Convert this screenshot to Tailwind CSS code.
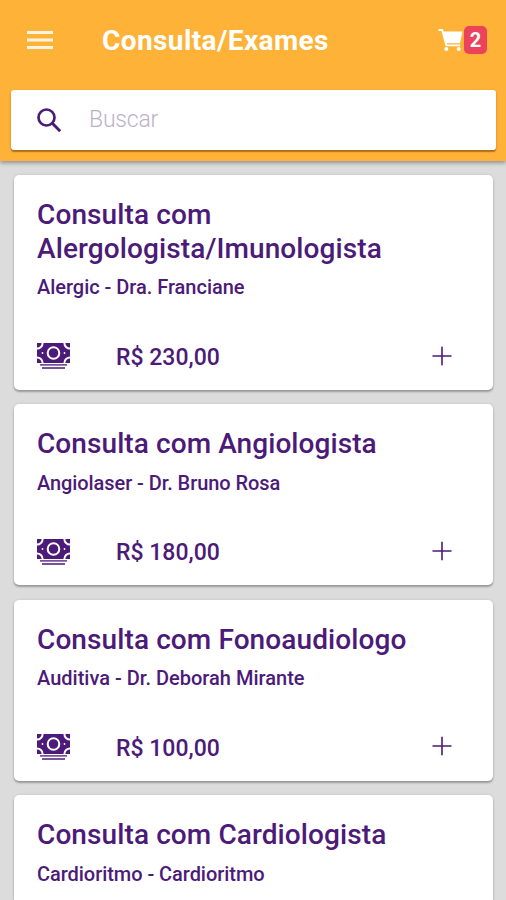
<!DOCTYPE html>
<html lang="pt-BR">
<head>
<meta charset="utf-8">
<title>Consulta/Exames</title>
<script src="https://cdn.jsdelivr.net/npm/@tailwindcss/browser@4"></script>
</head>
<body class="h-[900px] overflow-hidden bg-[#dcdcdc] font-['Roboto',sans-serif] text-[#4c1a78]">
<svg class="hidden">
  <symbol id="cash" viewBox="0 0 33 27">
    <rect width="33" height="20" fill="currentColor"/>
    <g fill="none" stroke="#fff" stroke-width="2">
      <path d="M5.600 -1V0A5.600 5.600 0 0 1 0 5.600H-1M27.400 -1V0A5.600 5.600 0 0 0 33 5.600H34M5.600 21V20A5.600 5.600 0 0 0 0 14.400H-1M27.400 21V20A5.600 5.600 0 0 1 33 14.400H34"/>
      <circle cx="16.500" cy="10" r="5.800"/>
    </g>
    <circle cx="5.500" cy="10" r=".9" fill="#fff"/><circle cx="27.500" cy="10" r=".9" fill="#fff"/>
    <path fill="currentColor" opacity=".75" d="M3 21H30V22.800H3ZM5 24H28V26H5Z"/>
  </symbol>
  <symbol id="plus" viewBox="0 0 20 20">
    <path d="M10 .8V19.200M.5 10H19.500" stroke="currentColor" stroke-width="1.600"/>
  </symbol>
</svg>
<header class="relative flex h-[161px] flex-col bg-[#ffb238] shadow-[0_2px_4px_rgba(0,0,0,0.35)]">
  <div class="flex h-[90px] items-start pl-[27px] text-white">
    <svg class="mt-[31px] h-[18px] w-[26px]" viewBox="0 0 26 18"><path d="M0 1.500H26M0 9H26M0 16.500H26" stroke="#fff5e2" stroke-width="2.800"/></svg>
    <h1 class="mt-[24px] ml-[49px] w-[336px] text-[28px] leading-[34px] font-bold whitespace-nowrap"><span class="tracking-[0.4px]">Consulta/Exames</span></h1>
    <svg class="mt-[28px] h-[24px] w-[25px]" viewBox="0 0 25 24">
      <path d="M.5 2H4.200L8.300 17.300H22" fill="none" stroke="#fff" stroke-width="1.800"/>
      <path d="M5 3.500H24.500L22 15.300H8.200Z" fill="#fff"/>
      <circle cx="8.300" cy="21" r="2" fill="#fff"/><circle cx="20.700" cy="21" r="2" fill="#fff"/>
    </svg>
    <span class="mt-[26px] ml-px flex h-[28px] w-[23px] items-center justify-center rounded-[5px] bg-[#eb445a] text-[20px] font-bold">2</span>
  </div>
  <div class="mx-[11px] mr-[10px] flex h-[60px] items-center rounded-[3px] bg-white pl-[26px] shadow-[0_2px_1px_rgba(120,70,0,0.5),0_1px_3px_rgba(120,70,0,0.3)]">
    <svg class="mt-px h-[25px] w-[25px]" viewBox="0 0 25 25"><circle cx="9.500" cy="9.500" r="8" fill="none" stroke="currentColor" stroke-width="2.700"/><path d="M15.300 15.300L23.200 23.200" stroke="currentColor" stroke-width="3"/></svg>
    <span class="ml-[27px] text-[23px] font-light tracking-[-0.2px] text-[#bcb2c8]">Buscar</span>
  </div>
</header>
<main class="flex flex-col gap-[14.500px] pt-[14px] pr-[13px] pl-[14px]">
  <article class="h-[214.500px] shrink-0 rounded-[5px] bg-white px-[23px] pt-[23px] shadow-[0_2px_2px_rgba(0,0,0,0.28),0_0_3px_rgba(0,0,0,0.12)]">
    <h2 class="text-[28px] leading-[34px] font-medium"><span class="tracking-[0.110px]">Consulta com<br>Alergologista/Imunologista</span></h2>
    <p class="mt-[9px] text-[20px] leading-[24px] font-medium tracking-[-0.030px]">Alergic - Dra. Franciane</p>
    <div class="mt-[23px] flex h-[67px] items-center">
      <svg class="mt-[2px] h-[27px] w-[33px]"><use href="#cash"/></svg>
      <span class="mt-[5px] ml-[46px] flex-1 text-[23px] font-medium">R$ 230,00</span>
      <svg class="mr-[18px] h-[20px] w-[20px]"><use href="#plus"/></svg>
    </div>
  </article>
  <article class="h-[181px] shrink-0 rounded-[5px] bg-white px-[23px] pt-[23px] shadow-[0_2px_2px_rgba(0,0,0,0.28),0_0_3px_rgba(0,0,0,0.12)]">
    <h2 class="text-[28px] leading-[34px] font-medium"><span class="tracking-[0.080px]">Consulta com Angiologista</span></h2>
    <p class="mt-[9.500px] text-[20px] leading-[24px] font-medium tracking-[-0.080px]">Angiolaser - Dr. Bruno Rosa</p>
    <div class="mt-[22.500px] flex h-[67px] items-center">
      <svg class="mt-[3px] h-[27px] w-[33px]"><use href="#cash"/></svg>
      <span class="mt-[5px] ml-[46px] flex-1 text-[23px] font-medium">R$ 180,00</span>
      <svg class="mr-[18px] h-[20px] w-[20px]"><use href="#plus"/></svg>
    </div>
  </article>
  <article class="h-[181px] shrink-0 rounded-[5px] bg-white px-[23px] pt-[23px] shadow-[0_2px_2px_rgba(0,0,0,0.28),0_0_3px_rgba(0,0,0,0.12)]">
    <h2 class="text-[28px] leading-[34px] font-medium"><span class="tracking-[0.100px]">Consulta com Fonoaudiologo</span></h2>
    <p class="mt-[9.500px] text-[20px] leading-[24px] font-medium">Auditiva - Dr. Deborah Mirante</p>
    <div class="mt-[22.500px] flex h-[67px] items-center">
      <svg class="mt-[2px] h-[27px] w-[33px]"><use href="#cash"/></svg>
      <span class="mt-[6px] ml-[46px] flex-1 text-[23px] font-medium">R$ 100,00</span>
      <svg class="mr-[18px] h-[20px] w-[20px]"><use href="#plus"/></svg>
    </div>
  </article>
  <article class="h-[105px] shrink-0 rounded-t-[5px] bg-white px-[23px] pt-[23px] shadow-[0_2px_2px_rgba(0,0,0,0.28),0_0_3px_rgba(0,0,0,0.12)]">
    <h2 class="text-[28px] leading-[34px] font-medium"><span class="tracking-[0.100px]">Consulta com Cardiologista</span></h2>
    <p class="mt-[9.500px] text-[20px] leading-[24px] font-medium tracking-[-0.050px]">Cardioritmo - Cardioritmo</p>
  </article>
</main>
</body>
</html>
